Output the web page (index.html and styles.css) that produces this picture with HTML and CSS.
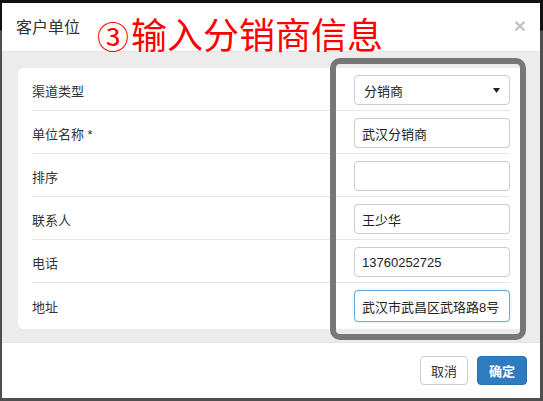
FILE: index.html
```html
<!DOCTYPE html>
<html lang="zh-CN">
<head>
<meta charset="utf-8">
<title>客户单位</title>
<link rel="stylesheet" href="styles.css">
</head>
<body>
<div class="screen">
  <div class="dialog">
    <div class="header">
      <h4 class="title">客户单位</h4>
      <button class="close" type="button">×</button>
    </div>
    <div class="note"><span class="circled">③</span>输入分销商信息</div>
    <div class="body">
      <div class="card">
        <div class="row">
          <label class="label">渠道类型</label>
          <div class="field select">
            <span>分销商</span>
            <svg class="caret" width="7" height="5" viewBox="0 0 7 5"><path d="M0 0H7L3.5 5Z" fill="#222"/></svg>
          </div>
        </div>
        <div class="row">
          <label class="label">单位名称 *</label>
          <input class="field" type="text" value="武汉分销商">
        </div>
        <div class="row">
          <label class="label">排序</label>
          <input class="field" type="text" value="">
        </div>
        <div class="row">
          <label class="label">联系人</label>
          <input class="field" type="text" value="王少华">
        </div>
        <div class="row">
          <label class="label">电话</label>
          <input class="field" type="text" value="13760252725">
        </div>
        <div class="row">
          <label class="label">地址</label>
          <input class="field focus" type="text" value="武汉市武昌区武珞路8号">
        </div>
      </div>
    </div>
    <div class="footer">
      <button class="btn btn-default" type="button">取消</button>
      <button class="btn btn-primary" type="button">确定</button>
    </div>
    <div class="frame"></div>
  </div>
</div>
</body>
</html>
```
FILE: styles.css
```css
* { box-sizing: border-box; }
html, body { margin: 0; padding: 0; }
body {
  font-family: "Liberation Sans", "Noto Sans CJK SC", sans-serif;
  font-size: 13px;
  color: #333;
}
.screen {
  width: 543px;
  height: 401px;
  background: linear-gradient(to bottom, #111 0, #111 30px, #4f4f4f 31px, #4f4f4f 100%);
  padding: 3px 3px 3px 2px;
}
.dialog {
  position: relative;
  width: 538px;
  height: 395px;
  background: #fff;
  display: flex;
  flex-direction: column;
}
.header {
  height: 49px;
  border-bottom: 1px solid #e5e5e5;
  display: flex;
  align-items: center;
  justify-content: space-between;
  padding: 0 14px 3px;
}
.title {
  margin: 0;
  font-size: 16px;
  font-weight: 400;
  color: #333;
}
.close {
  border: 0;
  background: none;
  padding: 0;
  font-family: "Liberation Sans", sans-serif;
  font-size: 21px;
  font-weight: 700;
  line-height: 1;
  color: #c4c4c4;
}
.note {
  position: absolute;
  left: 95px;
  top: 16px;
  font-size: 36px;
  line-height: 36px;
  color: #ff0000;
  white-space: nowrap;
}
.circled {
  font-size: 32px;
  margin-right: 2px;
}
.body {
  height: 290px;
  background: #ececec;
  padding: 16px 16px 15px;
}
.card {
  background: #fff;
  border-radius: 6px;
  padding: 0 14px 2px;
}
.row {
  display: flex;
  align-items: center;
  justify-content: space-between;
  padding: 7px 0 5px;
  border-bottom: 1px solid #e6e6e6;
}
.row:last-child { border-bottom: 0; }
.label { color: #333; font-size: 13px; }
.field {
  width: 156px;
  height: 30px;
  border: 1px solid #ccc;
  border-radius: 4px;
  background: #fff;
  padding: 0 7px;
  font-family: "Liberation Sans", "Noto Sans CJK SC", sans-serif;
  font-size: 13px;
  color: #222;
  outline: none;
}
.select {
  display: flex;
  align-items: center;
  justify-content: space-between;
  padding: 0 9px 0 9px;
}
.caret { display: block; }
.field.focus {
  height: 32px;
  border-color: #66afe9;
  box-shadow: 0 0 2px rgba(102, 175, 233, 0.5);
}
.footer {
  flex: 1;
  border-top: 1px solid #e5e5e5;
  display: flex;
  align-items: center;
  justify-content: flex-end;
  gap: 9px;
  padding: 0 13px 1px;
}
.btn {
  height: 29px;
  padding: 0 10px;
  border-radius: 4px;
  font-family: "Liberation Sans", "Noto Sans CJK SC", sans-serif;
  font-size: 13px;
  border: 1px solid #ccc;
}
.btn-default { background: #fff; color: #333; }
.btn-primary {
  background: #2f7bbf;
  border-color: #2c72b0;
  color: #fff;
  font-weight: 700;
  padding: 0 11px;
}
.frame {
  position: absolute;
  left: 328px;
  top: 55px;
  width: 196px;
  height: 282px;
  border: 6px solid #777;
  border-radius: 10px;
}
```
